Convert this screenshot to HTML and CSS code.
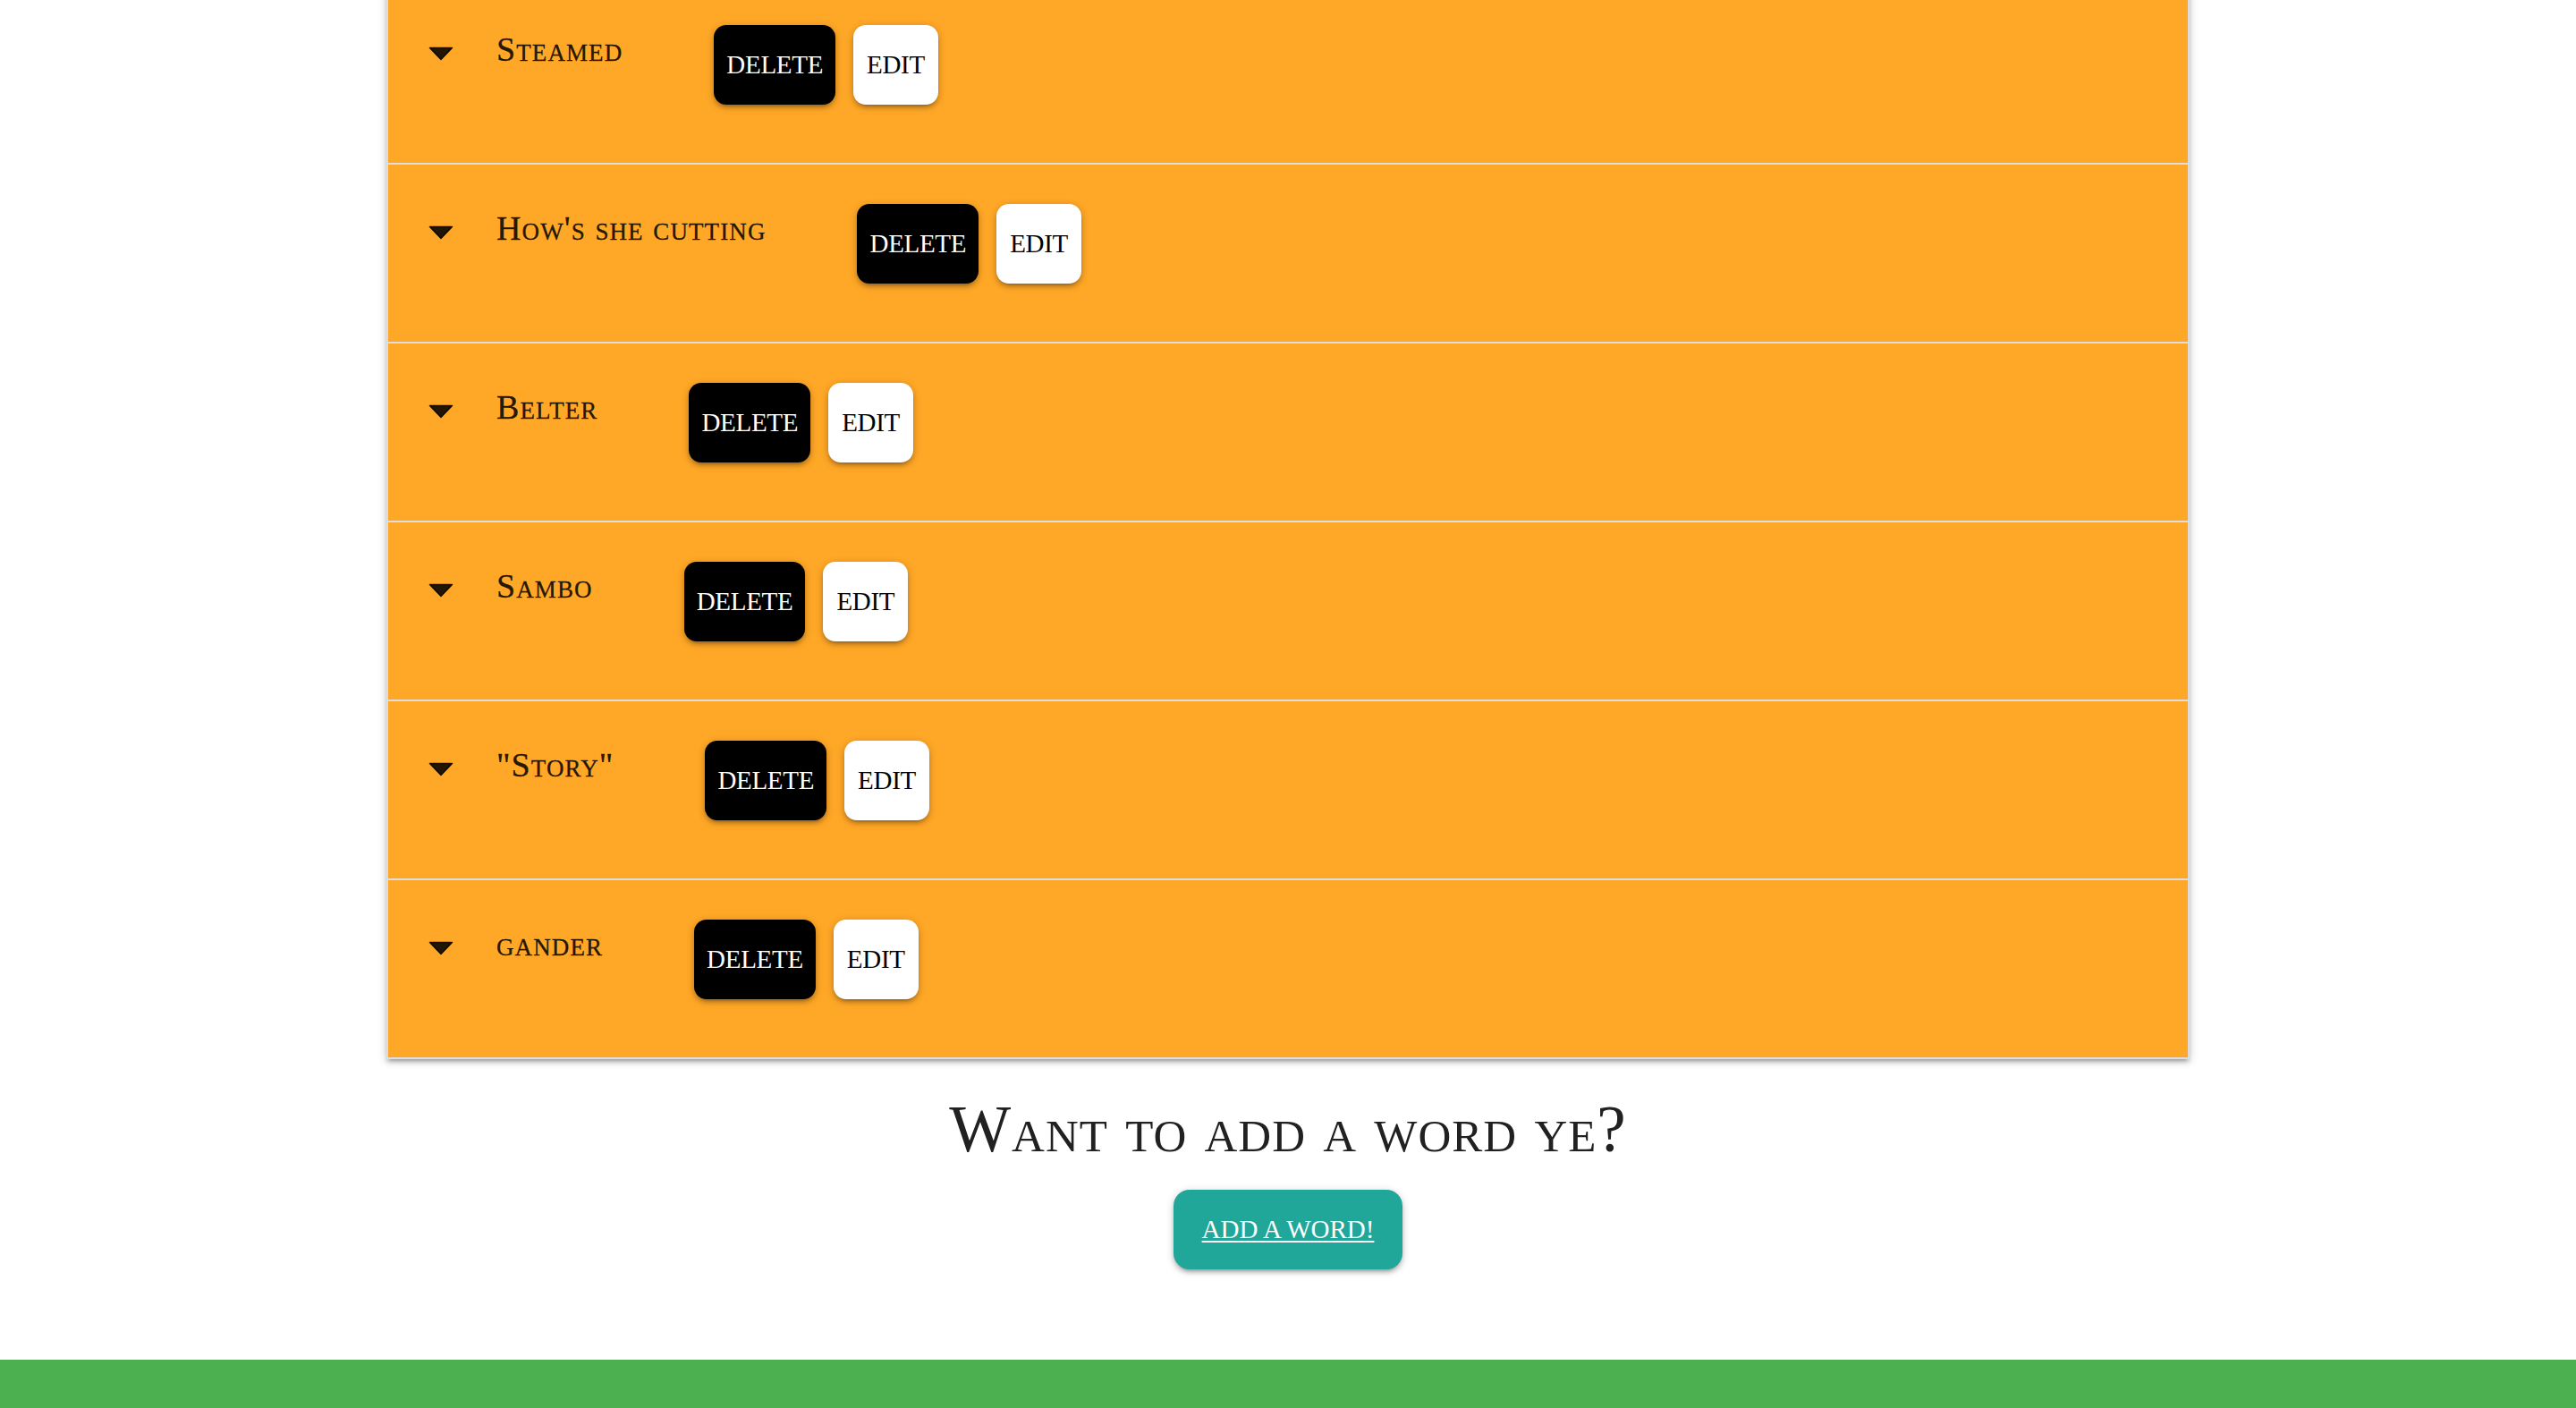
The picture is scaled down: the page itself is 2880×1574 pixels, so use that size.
FILE: index.html
```html
<!DOCTYPE html>
<html lang="en">
<head>
<meta charset="utf-8">
<title>Words</title>
<link rel="stylesheet" href="styles.css">
</head>
<body>
<main class="page">
  <ul class="collapsible">
    <li class="item">
      <div class="header">
        <svg class="arrow" viewBox="0 0 28 16"><path d="M1.5 1.5 H26.5 L14 14.5 Z"/></svg>
        <span class="word">Steamed</span>
        <div class="actions"><button class="btn btn-delete">Delete</button><button class="btn btn-edit">Edit</button></div>
      </div>
    </li>
    <li class="item">
      <div class="header">
        <svg class="arrow" viewBox="0 0 28 16"><path d="M1.5 1.5 H26.5 L14 14.5 Z"/></svg>
        <span class="word">How's she cutting</span>
        <div class="actions"><button class="btn btn-delete">Delete</button><button class="btn btn-edit">Edit</button></div>
      </div>
    </li>
    <li class="item">
      <div class="header">
        <svg class="arrow" viewBox="0 0 28 16"><path d="M1.5 1.5 H26.5 L14 14.5 Z"/></svg>
        <span class="word">Belter</span>
        <div class="actions"><button class="btn btn-delete">Delete</button><button class="btn btn-edit">Edit</button></div>
      </div>
    </li>
    <li class="item">
      <div class="header">
        <svg class="arrow" viewBox="0 0 28 16"><path d="M1.5 1.5 H26.5 L14 14.5 Z"/></svg>
        <span class="word">Sambo</span>
        <div class="actions"><button class="btn btn-delete">Delete</button><button class="btn btn-edit">Edit</button></div>
      </div>
    </li>
    <li class="item">
      <div class="header">
        <svg class="arrow" viewBox="0 0 28 16"><path d="M1.5 1.5 H26.5 L14 14.5 Z"/></svg>
        <span class="word">"Story"</span>
        <div class="actions"><button class="btn btn-delete">Delete</button><button class="btn btn-edit">Edit</button></div>
      </div>
    </li>
    <li class="item">
      <div class="header">
        <svg class="arrow" viewBox="0 0 28 16"><path d="M1.5 1.5 H26.5 L14 14.5 Z"/></svg>
        <span class="word">gander</span>
        <div class="actions"><button class="btn btn-delete">Delete</button><button class="btn btn-edit">Edit</button></div>
      </div>
    </li>
  </ul>
  <h4 class="prompt">Want to add a word ye?</h4>
  <div class="add-wrap"><a class="btn btn-add" href="#">Add a word!</a></div>
</main>
<footer class="footer"></footer>
</body>
</html>
```
FILE: styles.css
```css
html, body {
  margin: 0;
  padding: 0;
  background: #ffffff;
  font-family: "Liberation Serif", "Times New Roman", serif;
  color: rgba(0, 0, 0, 0.87);
}

.page {
  width: 70%;
  margin: -18px auto 0;
}

.collapsible {
  list-style: none;
  margin: 0;
  padding: 0;
  border-top: 2px solid #ddd;
  border-left: 2px solid #ddd;
  border-right: 2px solid #ddd;
  box-shadow: 0 4px 4px 0 rgba(0, 0, 0, 0.14), 0 6px 2px -4px rgba(0, 0, 0, 0.12), 0 2px 10px 0 rgba(0, 0, 0, 0.2);
}

.item {
  background: #ffa726;
  border-bottom: 2px solid #ddd;
}

.header {
  height: 198px;
  box-sizing: border-box;
  padding: 32px 0 0 45px;
  display: flex;
  align-items: flex-start;
}

.arrow {
  width: 28px;
  height: 16px;
  margin-top: 36px;
  flex: none;
}

.arrow path {
  fill: rgba(0, 0, 0, 0.87);
  stroke: rgba(0, 0, 0, 0.87);
  stroke-width: 1.5;
  stroke-linejoin: round;
}

.word {
  font-size: 38px;
  line-height: 38px;
  font-variant: small-caps;
  letter-spacing: 1.1px;
  margin: 20px 102px 0 48px;
  white-space: nowrap;
  -webkit-text-stroke: 0.3px rgba(0, 0, 0, 0.87);
}

.actions {
  display: flex;
  gap: 20px;
  margin-top: 12px;
}

.btn {
  display: inline-block;
  height: 89px;
  line-height: 89px;
  padding: 0 15px;
  border: none;
  border-radius: 14px;
  font-family: "Liberation Serif", "Times New Roman", serif;
  font-size: 29px;
  letter-spacing: -0.3px;
  text-transform: uppercase;
  cursor: pointer;
  box-shadow: 0 4px 4px 0 rgba(0, 0, 0, 0.14), 0 6px 2px -4px rgba(0, 0, 0, 0.12), 0 2px 10px 0 rgba(0, 0, 0, 0.2);
}

.btn-delete {
  background: #000000;
  color: #ffffff;
  padding: 0 14px;
}

.btn-edit {
  background: #ffffff;
  color: #000000;
}

.prompt {
  margin: 39px 0 0;
  text-align: center;
  font-size: 73px;
  line-height: 80px;
  font-weight: normal;
  font-variant: small-caps;
  letter-spacing: 1px;
  color: #212121;
}

.add-wrap {
  display: flex;
  justify-content: center;
  margin-top: 27px;
}

.btn-add {
  background: #20a799;
  color: #ffffff;
  padding: 0 32px;
  border-radius: 18px;
  letter-spacing: 0;
  text-decoration: underline;
  text-decoration-thickness: 2px;
  text-underline-offset: 3px;
}

.footer {
  margin-top: 101px;
  height: 300px;
  background: #4caf50;
}
```
